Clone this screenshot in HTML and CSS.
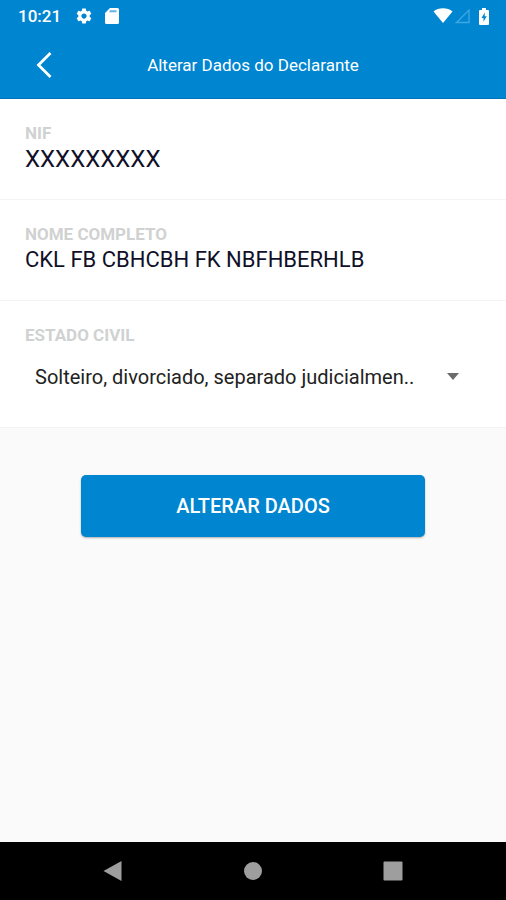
FILE: index.html
```html
<!DOCTYPE html>
<html lang="pt">
<head>
<meta charset="utf-8">
<meta name="viewport" content="width=device-width, initial-scale=1">
<title>Alterar Dados do Declarante</title>
<link rel="stylesheet" href="styles.css">
</head>
<body>
<header class="top">
  <div class="status">
    <span class="time">10:21</span>
    <svg class="gear" width="18" height="18" viewBox="0 0 24 24" aria-hidden="true"><path fill="currentColor" d="M19.43 12.98c.04-.32.07-.64.07-.98s-.03-.66-.07-.98l2.11-1.65c.19-.15.24-.42.12-.64l-2-3.46c-.12-.22-.39-.3-.61-.22l-2.49 1c-.52-.4-1.08-.73-1.69-.98l-.38-2.65C14.46 2.18 14.25 2 14 2h-4c-.25 0-.46.18-.49.42l-.38 2.65c-.61.25-1.17.59-1.69.98l-2.49-1c-.23-.09-.49 0-.61.22l-2 3.46c-.13.22-.07.49.12.64l2.11 1.65c-.04.32-.07.65-.07.98s.03.66.07.98l-2.11 1.65c-.19.15-.24.42-.12.64l2 3.46c.12.22.39.3.61.22l2.49-1c.52.4 1.08.73 1.69.98l.38 2.65c.03.24.24.42.49.42h4c.25 0 .46-.18.49-.42l.38-2.65c.61-.25 1.17-.59 1.69-.98l2.49 1c.23.09.49 0 .61-.22l2-3.46c.12-.22.07-.49-.12-.64l-2.11-1.65zM12 15.500c-1.930 0-3.500-1.570-3.500-3.500s1.570-3.500 3.500-3.500 3.500 1.570 3.500 3.500-1.570 3.500-3.500 3.500z"/></svg>
    <svg width="14" height="16" viewBox="0 0 14 16" aria-hidden="true"><path fill="currentColor" d="M5 0h7.500a1.500 1.500 0 0 1 1.500 1.500v13a1.500 1.500 0 0 1-1.500 1.500h-11A1.500 1.500 0 0 1 0 14.500V5z"/><path fill="#5fb4e4" d="M5 2.300h6.500v2H4z"/></svg>
    <span class="system">
      <svg width="20" height="16" viewBox="0 0 20 16" aria-hidden="true"><path fill="currentColor" d="M10 15 .5 3.500C3 1.300 6.300.3 10 .3s7 1 9.500 3.200z"/></svg>
      <svg class="signal" width="16" height="16" viewBox="0 0 16 16" aria-hidden="true"><path fill="none" stroke="#3fa8e4" stroke-width="1.300" d="M14 2v12.500H1.500z"/></svg>
      <svg class="battery" width="10" height="17" viewBox="0 0 10 17" aria-hidden="true"><path fill="currentColor" d="M3 0h4v2h2a1 1 0 0 1 1 1v13a1 1 0 0 1-1 1H1a1 1 0 0 1-1-1V3a1 1 0 0 1 1-1h2z"/><path fill="#0085d0" d="M5.800 4.500 2.500 10h2v3.800l3.200-5.500h-2z"/></svg>
    </span>
  </div>
  <div class="bar">
    <button class="back" type="button" aria-label="Voltar"><svg width="18" height="28" viewBox="0 0 18 28" aria-hidden="true"><path fill="none" stroke="currentColor" stroke-width="2.800" d="M15.500 2 3.500 14l12 12"/></svg></button>
    <h1 class="title">Alterar Dados do Declarante</h1>
  </div>
</header>
<main class="content">
  <form>
    <section class="field">
      <h2 class="label">NIF</h2>
      <p class="value number">XXXXXXXXX</p>
    </section>
    <section class="field">
      <h2 class="label">NOME COMPLETO</h2>
      <p class="value">CKL FB CBHCBH FK NBFHBERHLB</p>
    </section>
    <section class="field">
      <label class="label" for="estado">ESTADO CIVIL</label>
      <div class="picker">
        <select class="select" id="estado"><option>Solteiro, divorciado, separado judicialmen..</option></select>
        <svg class="caret" width="12" height="7" viewBox="0 0 12 7" aria-hidden="true"><path fill="currentColor" d="M0 0h12L6 7z"/></svg>
      </div>
    </section>
    <button class="submit" type="submit">ALTERAR DADOS</button>
  </form>
</main>
<nav class="nav" aria-label="Sistema">
  <button class="key" type="button" aria-label="Voltar"><svg width="22" height="22" viewBox="0 0 22 22" aria-hidden="true"><path fill="currentColor" d="M19.500 1v20L1.500 11z"/></svg></button>
  <button class="key" type="button" aria-label="Início"><svg width="22" height="22" viewBox="0 0 22 22" aria-hidden="true"><circle cx="11" cy="11" r="9" fill="currentColor"/></svg></button>
  <button class="key" type="button" aria-label="Recentes"><svg width="22" height="22" viewBox="0 0 22 22" aria-hidden="true"><rect x="1.500" y="1.500" width="19" height="19" rx="1" fill="currentColor"/></svg></button>
</nav>
</body>
</html>
```
FILE: styles.css
```css
* {
  box-sizing: border-box;
}

body {
  margin: 0;
  min-height: 100vh;
  display: flex;
  flex-direction: column;
  background: #fafafa;
  color: #101028;
  font-family: Roboto, "Liberation Sans", sans-serif;
}

svg {
  display: block;
}

button,
select {
  margin: 0;
  padding: 0;
  border: 0;
  background: none;
  color: inherit;
  font: inherit;
}

.top {
  background: #0085d0;
  color: #fff;
  border-bottom: 1px solid #0072b8;
}

.status {
  display: flex;
  align-items: center;
  height: 32px;
  padding: 0 17px 0 18px;
}

.time {
  font-size: 17px;
  font-weight: 500;
}

.gear {
  margin: 0 12px 0 14px;
}

.system {
  display: flex;
  align-items: center;
  margin-left: auto;
}

.signal {
  margin: 0 8px 0 2px;
}

.bar {
  display: grid;
  grid-template-columns: 88px 1fr 88px;
  align-items: center;
  height: 66px;
}

.back {
  display: grid;
  place-items: center;
  height: 56px;
}

.title {
  margin: 0;
  font-size: 17px;
  font-weight: 400;
  text-align: center;
}

.content {
  flex: 1;
}

.field {
  padding: 24px 25px;
  background: #fff;
  border-bottom: 1px solid #f4f4f4;
}

.label {
  display: block;
  margin: 0;
  color: #d0d2d2;
  font-size: 17px;
  font-weight: 700;
  line-height: 20px;
}

.value {
  margin: 0;
  font-size: 22px;
  line-height: 32px;
}

.number {
  font-size: 24px;
}

.picker {
  position: relative;
  margin-top: 6px;
}

.select {
  display: block;
  appearance: none;
  width: 100%;
  height: 52px;
  padding: 0 50px 0 10px;
  color: #222;
  font-size: 20px;
}

.caret {
  position: absolute;
  top: 50%;
  right: 22px;
  margin-top: -4px;
  color: #6b6b6b;
  pointer-events: none;
}

.submit {
  display: block;
  width: 68%;
  height: 62px;
  margin: 47px auto;
  border-radius: 5px;
  background: #0085d0;
  box-shadow: 0 1px 2px rgba(0, 0, 0, 0.3);
  color: #fff;
  font-size: 20px;
  font-weight: 500;
}

.nav {
  display: flex;
  justify-content: space-between;
  align-items: center;
  height: 58px;
  padding: 0 102px;
  background: #000;
  color: #9e9e9e;
}
```
